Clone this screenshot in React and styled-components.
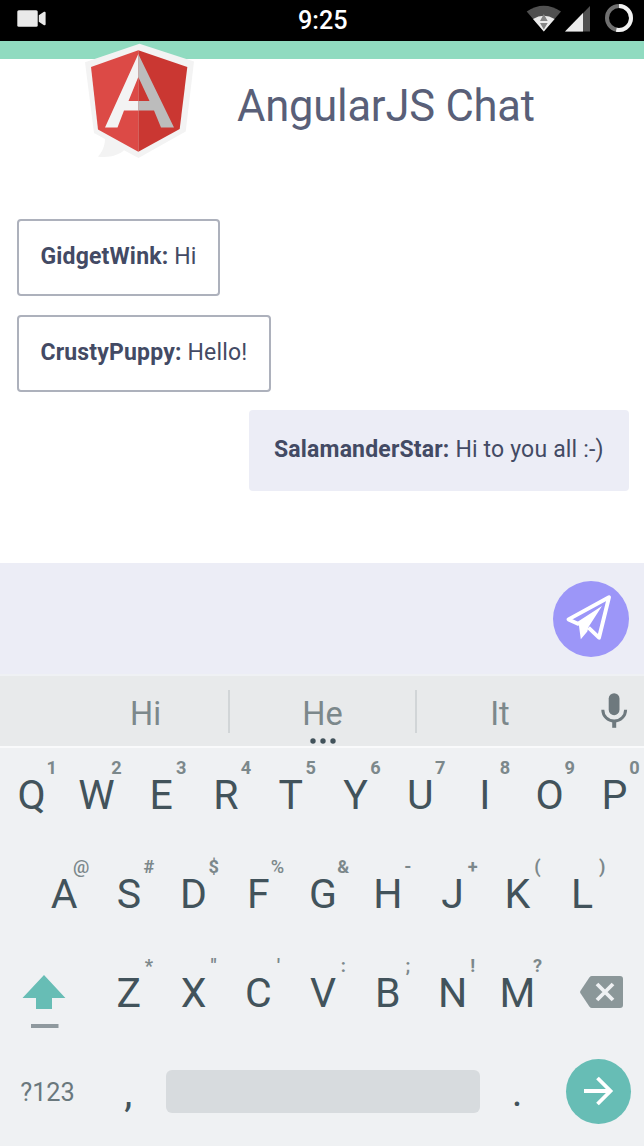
import React from "react";
import styled, { createGlobalStyle } from "styled-components";

const GlobalStyle = createGlobalStyle`
  * { box-sizing: border-box; }
  body { margin: 0; background: #fff; font-family: Roboto, "Liberation Sans", sans-serif; }
`;

const Screen = styled.main`
  width: 644px;
  height: 1146px;
  display: flex;
  flex-direction: column;
  overflow: hidden;
  background: #fff;
`;

const StatusBar = styled.div`
  flex: none;
  height: 41px;
  padding: 0 11px 0 17px;
  display: grid;
  grid-template-columns: 281px 1fr auto;
  align-items: start;
  background: #000;
`;

const Clock = styled.time`
  color: #fff;
  font-size: 25.2px;
  font-weight: 500;
  line-height: 41px;
`;

const StatusIcons = styled.div`
  display: flex;
  justify-content: flex-end;
  align-items: center;
  height: 41px;
`;

const Accent = styled.div`
  flex: none;
  height: 18px;
  background: #90dbc0;
`;

const Header = styled.header`
  flex: none;
  display: flex;
  height: 160px;
  padding-left: 84px;
`;

const LogoSvg = styled.svg`
  flex: none;
  margin-top: -17px;
`;

const Title = styled.h1`
  margin: 20px 0 0 41px;
  font-size: 43.5px;
  font-weight: 400;
  line-height: 56px;
  letter-spacing: -0.2px;
  color: #595f78;
  white-space: nowrap;
`;

const Messages = styled.section`
  flex: none;
  height: 344px;
  padding: 0 15px 0 17px;
  display: flex;
  flex-direction: column;
  align-items: flex-start;
  gap: 18.5px;
`;

const Bubble = styled.p`
  margin: 0;
  width: ${(p) => p.$width}px;
  height: ${(p) => (p.$own ? 81 : 77)}px;
  align-self: ${(p) => (p.$own ? "flex-end" : "flex-start")};
  padding: ${(p) => (p.$own ? "26px 0 0 25px" : "22px 0 0 21.5px")};
  border: ${(p) => (p.$own ? "0" : "2px solid #adb1bc")};
  border-radius: 4px;
  background: ${(p) => (p.$own ? "#ecedf6" : "#fff")};
  color: #434a64;
  font-size: 23px;
  line-height: 28px;
  letter-spacing: 0.17px;
  white-space: nowrap;

  b { font-weight: 700; }
`;

const Composer = styled.section`
  flex: none;
  height: 111px;
  padding: 18px 15px 0;
  display: flex;
  justify-content: flex-end;
  background: #ecedf6;
`;

const SendButton = styled.button`
  width: 76px;
  height: 76px;
  padding: 0;
  border: 0;
  border-radius: 50%;
  background: #9c96f8;
  display: flex;
`;

const Suggestions = styled.div`
  flex: none;
  height: 74px;
  border-top: 2px solid #eff1f4;
  border-bottom: 2px solid #f9fafb;
  padding-left: 63px;
  display: grid;
  grid-template-columns: 167px 187px 166px 61px;
  background: #e8eaeb;
`;

const Suggestion = styled.div`
  height: 43px;
  margin-top: 14px;
  border-right: ${(p) => (p.$last ? "0" : "2px solid #d1d5d7")};
  color: #7c888b;
  font-size: 32.5px;
  line-height: 48px;
  text-align: center;
`;

const More = styled.svg`
  display: block;
  margin: -1px auto 0;
`;

const Keyboard = styled.section`
  flex: 1;
  background: #eff1f3;
`;

const KeyRow = styled.div`
  height: 99px;
  display: flex;
  margin-left: ${(p) => p.$indent}px;
`;

const Key = styled.div`
  position: relative;
  flex: none;
  width: 64.75px;
  padding-top: 27px;
  color: #42535b;
  font-size: 41px;
  line-height: 41px;
  text-align: center;
`;

const Hint = styled.span`
  position: absolute;
  top: 9px;
  left: ${(p) => 38.5 - p.$shift}px;
  width: 28px;
  color: #7c888b;
  font-size: 18.2px;
  font-weight: ${(p) => (p.$shift ? 500 : 700)};
  line-height: 21px;
  text-align: center;
`;

const IconKey = styled.div`
  flex: none;
  width: ${(p) => p.$width}px;
  padding: 27px 0 0 ${(p) => p.$left}px;
`;

const BottomRow = styled.div`
  height: 101px;
  display: flex;
`;

const ModeKey = styled.div`
  width: 96px;
  padding: 28px 1px 0 0;
  color: #6a787d;
  font-size: 25.3px;
  line-height: 40px;
  text-align: center;
`;

const SpaceKey = styled.div`
  width: 314px;
  height: 43px;
  margin: 25px 5px 0;
  border-radius: 6px;
  background: #d7dbde;
`;

const EnterKey = styled.button`
  width: 65px;
  height: 65px;
  margin: 14px 0 0 16px;
  padding: 0;
  border: 0;
  border-radius: 50%;
  background: #67bdb5;
  display: flex;
`;

const AngularLogo = () => (
  <LogoSvg width="112" height="118" viewBox="84 42 112 118">
    <path fill="#f3f3f3" d="M139.5 43.7 194 61.5 185.7 131.5 138.5 158 124 150.3C119 155 110 158 98 156.7C102 152 105 146 105 139L94 133 85 62.3Z" />
    <path fill="#dc4a46" d="M138.3 50.3V151.7L98 129.5 91 67Z" />
    <path fill="#ca3732" d="M138.3 50.3 187.3 67 179.7 129 138.3 151.7Z" />
    <path fill="#f3f3f3" d="M138.3 54V77L128.5 101H138.3V110.6H124L117.5 127.6H105Z" />
    <path fill="#bcbcbc" d="M138.3 54 174 127.6H161L154 110.6H138.3V101H149.5L138.3 77Z" />
  </LogoSvg>
);

const CameraIcon = () => (
  <svg width="30" height="41" viewBox="17 0 30 41">
    <rect x="17.3" y="10.2" width="20.4" height="16.6" rx="1.5" fill="#e9e9e9" />
    <path d="M38.8 15.2 44 11.8Q45.6 11.2 45.6 12.7V24.3Q45.6 25.8 44 25.2L38.8 21.7Z" fill="#e9e9e9" />
  </svg>
);

const SignalIcons = () => (
  <svg width="108" height="41" viewBox="525 0 108 41">
    <path d="M526.7 11.5Q543.7 0 561 11.5L543.8 31.5Z" fill="#505050" />
    <path d="M533 19Q543.7 12.6 554.6 19L543.8 31.5Z" fill="#ececec" />
    <path d="M543.8 14 547.7 21H540ZM540 23H547.7L543.8 29.5Z" fill="#858585" />
    <path d="M590 6V31.5H565Z" fill="#505050" />
    <path d="M583 13.1V31.5H565Z" fill="#ececec" />
    <circle cx="619" cy="18" r="12" fill="none" stroke="#707070" strokeWidth="4" />
    <path d="M619 6A12 12 0 1 1 616.3 29.7" fill="none" stroke="#f3f3f3" strokeWidth="4" />
  </svg>
);

const PlaneIcon = () => (
  <svg width="76" height="76" viewBox="553 581 76 76">
    <path d="M579 624.2 568.5 619.4 609 597.3 599 637.7 588.5 627.7" fill="none" stroke="#fff" strokeWidth="3.9" strokeLinejoin="round" />
    <path d="M602 606 576.5 622.5 579 626 580.8 639.2 587.3 631.5 588.5 627Z" fill="#fff" />
  </svg>
);

const MicIcon = () => (
  <svg width="60" height="70" viewBox="583 676 60 70">
    <rect x="608.7" y="693.2" width="10.8" height="22" rx="5.4" fill="#6e797e" />
    <path d="M602.8 709.7A11.4 11.4 0 0 0 625.6 709.7" fill="none" stroke="#6e797e" strokeWidth="3" />
    <path d="M614.2 720V727.8" stroke="#6e797e" strokeWidth="4" />
  </svg>
);

const ShiftIcon = () => (
  <svg width="44" height="58" viewBox="22 973 44 58">
    <path d="M44 975 65.4 998H52V1009H36V998H22.5Z" fill="#67bdb5" />
    <path d="M31 1026H58.5" stroke="#8f999e" strokeWidth="4" />
  </svg>
);

const BackspaceIcon = () => (
  <svg width="44" height="58" viewBox="580 973 44 58">
    <path d="M592 976H620Q623 976 623 979V1005Q623 1008 620 1008H592Q590.5 1008 589.5 1006.7L580.5 993.3Q579.7 992 580.5 990.7L589.5 977.3Q590.5 976 592 976Z" fill="#8b9799" />
    <path d="M597 984 613 1000M613 984 597 1000" stroke="#eff1f3" strokeWidth="3.8" />
  </svg>
);

const ArrowIcon = () => (
  <svg width="65" height="65" viewBox="566 1059 65 65">
    <path d="M584 1091H610M597.5 1078 610.5 1091 597.5 1104" fill="none" stroke="#fff" strokeWidth="3.8" />
  </svg>
);

const messages = [
  { name: "GidgetWink", text: "Hi", width: 203 },
  { name: "CrustyPuppy", text: "Hello!", width: 254 },
  { name: "SalamanderStar", text: "Hi to you all :-)", width: 380, own: true },
];

const topKeys = ["Q1", "W2", "E3", "R4", "T5", "Y6", "U7", "I8", "O9", "P0"];
const middleKeys = ["A@", "S#", "D$", "F%", "G&", "H-", "J+", "K(", "L)"];
const lowerKeys = ["Z*", 'X"', "C'", "V:", "B;", "N!", "M?"];

// Wide symbols sit slightly closer to their letter.
const hintShift = { "@": 3, "%": 1 };

const Keys = ({ items }) =>
  items.map((k) => (
    <Key key={k}>
      {k[0]}
      <Hint $shift={hintShift[k[1]] || 0}>{k[1]}</Hint>
    </Key>
  ));

export default function App() {
  return (
    <Screen>
      <GlobalStyle />
      <StatusBar>
        <CameraIcon />
        <Clock>9:25</Clock>
        <StatusIcons>
          <SignalIcons />
        </StatusIcons>
      </StatusBar>
      <Accent />
      <Header>
        <AngularLogo />
        <Title>AngularJS Chat</Title>
      </Header>
      <Messages>
        {messages.map((m) => (
          <Bubble key={m.name} $width={m.width} $own={m.own}>
            <b>{m.name}:</b> {m.text}
          </Bubble>
        ))}
      </Messages>
      <Composer>
        <SendButton aria-label="Send">
          <PlaneIcon />
        </SendButton>
      </Composer>
      <Suggestions>
        <Suggestion>Hi</Suggestion>
        <Suggestion>
          He
          <More width="28" height="8" viewBox="0 0 28 8">
            <circle cx="4" cy="4" r="2.7" fill="#42535b" />
            <circle cx="14" cy="4" r="2.7" fill="#42535b" />
            <circle cx="24" cy="4" r="2.7" fill="#42535b" />
          </More>
        </Suggestion>
        <Suggestion $last>It</Suggestion>
        <MicIcon />
      </Suggestions>
      <Keyboard>
        <KeyRow $indent={-0.7}>
          <Keys items={topKeys} />
        </KeyRow>
        <KeyRow $indent={31.7}>
          <Keys items={middleKeys} />
        </KeyRow>
        <KeyRow $indent={0}>
          <IconKey $width={96.5} $left={22}>
            <ShiftIcon />
          </IconKey>
          <Keys items={lowerKeys} />
          <IconKey $width={94} $left={30.25}>
            <BackspaceIcon />
          </IconKey>
        </KeyRow>
        <BottomRow>
          <ModeKey>?123</ModeKey>
          <Key>,</Key>
          <SpaceKey />
          <Key>.</Key>
          <EnterKey aria-label="Enter">
            <ArrowIcon />
          </EnterKey>
        </BottomRow>
      </Keyboard>
    </Screen>
  );
}
